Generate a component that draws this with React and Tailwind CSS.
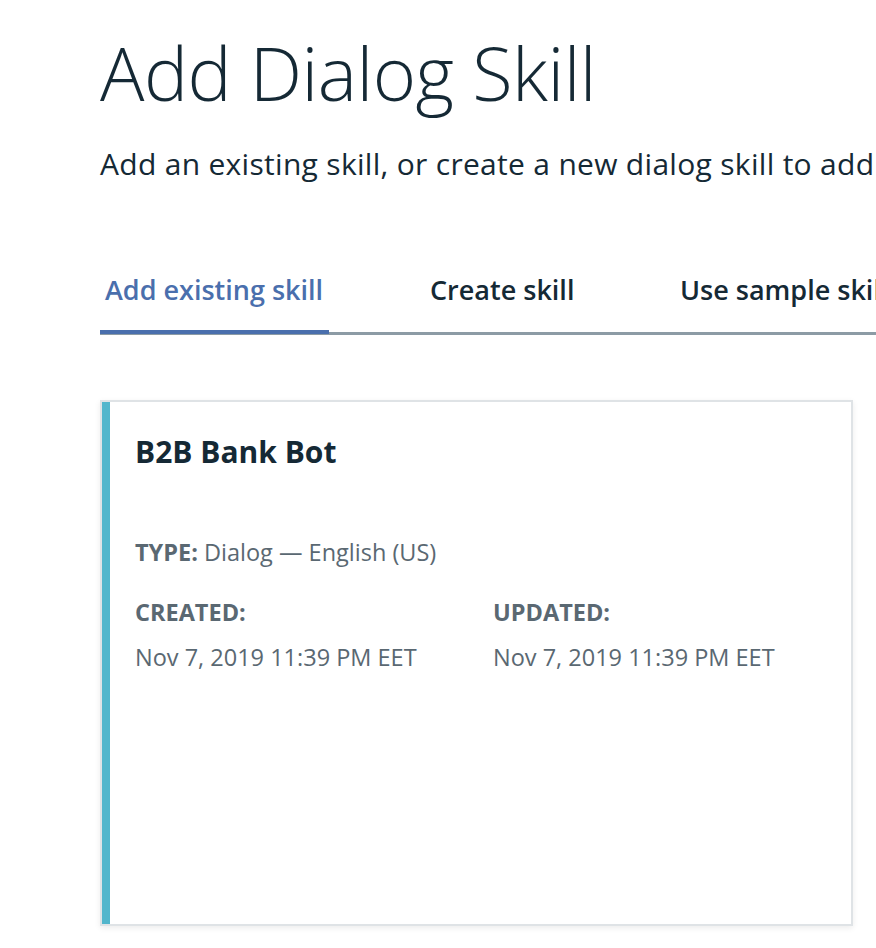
import React from 'react';

const tabs = ["Add existing skill", "Create skill", "Use sample skill"];

const App = () => {
    return (
        <div className="w-[876px] h-[948px] overflow-hidden bg-white text-[#152935] font-['Open_Sans',sans-serif] whitespace-nowrap">
            <div className="pl-[100px] pt-[33px]">
                {/* header */}
                <h1 className="text-[74px] leading-[80px] font-light tracking-[-0.5px]">Add Dialog Skill</h1>
                <p className="mt-[33px] text-[30px] leading-[36px] tracking-[0.3px]">Add an existing skill, or create a new dialog skill to add</p>

                {/* tabs */}
                <div className="mt-[90px] flex border-b-[3px] border-[#8c9ba5] w-[900px]">
                    <div className="w-[229px] pl-[5px] pb-[22px] -mb-[2px] border-b-[4px] border-[#4a6fad] text-[#4a6fad] text-[27px] leading-[36px] font-semibold">{tabs[0]}</div>
                    <div className="ml-[101px] w-[250px] text-[27px] leading-[36px] font-semibold">{tabs[1]}</div>
                    <div className="text-[27px] leading-[36px] font-semibold">{tabs[2]}</div>
                </div>

                {/* skill card */}
                <div className="mt-[65px] w-[753px] h-[526px] flex border-2 border-[#dfe3e6] shadow-[0_2px_6px_rgba(0,0,0,0.08)]">
                    <div className="w-[8px] bg-[#52b6cc]"></div>
                    <div className="pl-[25px] pt-[30px] flex-1">
                        <h2 className="text-[30px] leading-[40px] font-bold">B2B Bank Bot</h2>
                        <div className="mt-[65px] text-[23.5px] leading-[30px] text-[#5a6872]">
                            <span className="font-bold">TYPE:</span> Dialog — English (US)
                        </div>
                        <div className="mt-[30px] flex text-[23.5px] leading-[30px] text-[#5a6872]">
                            <div className="w-[358px]">
                                <div className="font-bold">CREATED:</div>
                                <div className="mt-[15px]">Nov 7, 2019 11:39 PM EET</div>
                            </div>
                            <div>
                                <div className="font-bold">UPDATED:</div>
                                <div className="mt-[15px]">Nov 7, 2019 11:39 PM EET</div>
                            </div>
                        </div>
                    </div>
                </div>
            </div>
        </div>
    );
};

export default App;
